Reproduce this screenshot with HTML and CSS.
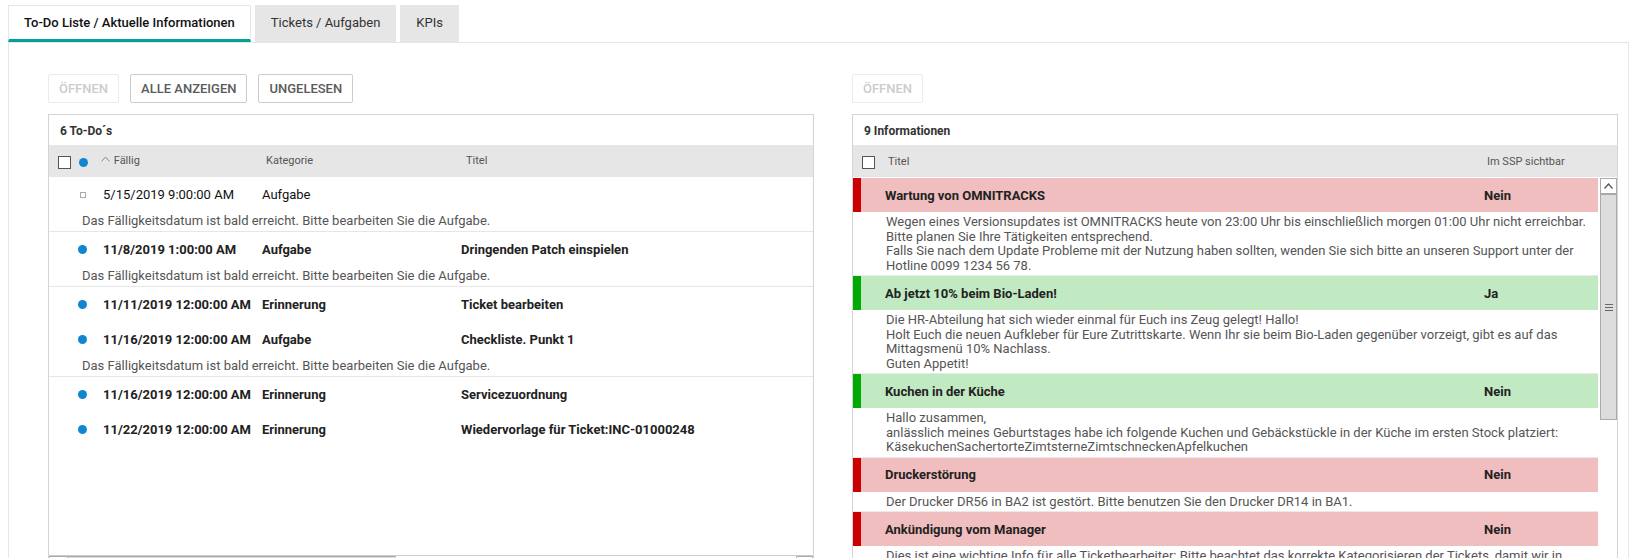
FILE: index.html
```html
<!DOCTYPE html>
<html lang="de">
<head>
    <meta charset="UTF-8">
    <title>To-Do Liste / Aktuelle Informationen</title>
    <link rel="stylesheet" href="styles.css">
</head>
<body>
    <div class="page">
        <div class="tabs">
            <div class="tab active">To-Do Liste / Aktuelle Informationen</div>
            <div class="tab">Tickets / Aufgaben</div>
            <div class="tab">KPIs</div>
        </div>

        <div class="content">
            <div class="columns">
                <!-- To-Do Liste -->
                <section class="col">
                    <div class="toolbar">
                        <button class="btn" disabled>Öffnen</button>
                        <button class="btn">Alle anzeigen</button>
                        <button class="btn">Ungelesen</button>
                    </div>
                    <div class="panel">
                        <div class="panel-title">6 To-Do´s</div>
                        <div class="todo-head">
                            <div class="head-check"><span class="checkbox"></span><span class="dot"></span></div>
                            <div class="sort">
                                <svg width="9" height="6" viewBox="0 0 9 6"><path d="M0.5 5.5 L4.5 1 L8.5 5.5" fill="none" stroke="#888" stroke-width="1"/></svg>
                                Fällig
                            </div>
                            <div>Kategorie</div>
                            <div>Titel</div>
                        </div>
                        <div class="todo-list">
                            <div class="todo-group">
                                <div class="todo-row read">
                                    <div class="mark"><span class="read-icon"></span></div>
                                    <div>5/15/2019 9:00:00 AM</div>
                                    <div>Aufgabe</div>
                                    <div></div>
                                </div>
                                <div class="todo-desc">Das Fälligkeitsdatum ist bald erreicht. Bitte bearbeiten Sie die Aufgabe.</div>
                            </div>
                            <div class="todo-group">
                                <div class="todo-row">
                                    <div class="mark"><span class="dot"></span></div>
                                    <div>11/8/2019 1:00:00 AM</div>
                                    <div>Aufgabe</div>
                                    <div>Dringenden Patch einspielen</div>
                                </div>
                                <div class="todo-desc">Das Fälligkeitsdatum ist bald erreicht. Bitte bearbeiten Sie die Aufgabe.</div>
                            </div>
                            <div class="todo-group">
                                <div class="todo-row">
                                    <div class="mark"><span class="dot"></span></div>
                                    <div>11/11/2019 12:00:00 AM</div>
                                    <div>Erinnerung</div>
                                    <div>Ticket bearbeiten</div>
                                </div>
                                <div class="todo-row">
                                    <div class="mark"><span class="dot"></span></div>
                                    <div>11/16/2019 12:00:00 AM</div>
                                    <div>Aufgabe</div>
                                    <div>Checkliste. Punkt 1</div>
                                </div>
                                <div class="todo-desc">Das Fälligkeitsdatum ist bald erreicht. Bitte bearbeiten Sie die Aufgabe.</div>
                            </div>
                            <div class="todo-group last">
                                <div class="todo-row">
                                    <div class="mark"><span class="dot"></span></div>
                                    <div>11/16/2019 12:00:00 AM</div>
                                    <div>Erinnerung</div>
                                    <div>Servicezuordnung</div>
                                </div>
                                <div class="todo-row">
                                    <div class="mark"><span class="dot"></span></div>
                                    <div>11/22/2019 12:00:00 AM</div>
                                    <div>Erinnerung</div>
                                    <div>Wiedervorlage für Ticket:INC-01000248</div>
                                </div>
                            </div>
                        </div>
                        <div class="hscroll">
                            <span class="hs-btn"></span>
                            <span class="hs-thumb"></span>
                            <span class="hs-track"></span>
                            <span class="hs-btn end"></span>
                        </div>
                    </div>
                </section>

                <!-- Informationen -->
                <section class="col">
                    <div class="toolbar">
                        <button class="btn" disabled>Öffnen</button>
                    </div>
                    <div class="panel">
                        <div class="panel-title">9 Informationen</div>
                        <div class="info-head">
                            <div><span class="checkbox"></span></div>
                            <div>Titel</div>
                            <div>Im SSP sichtbar</div>
                        </div>
                        <div class="info-body">
                            <div class="info-list">
                                <div class="info-row red">
                                    <div>Wartung von OMNITRACKS</div>
                                    <div>Nein</div>
                                </div>
                                <div class="info-desc">Wegen eines Versionsupdates ist OMNITRACKS heute von 23:00 Uhr bis einschließlich morgen 01:00 Uhr nicht erreichbar.<br>Bitte planen Sie Ihre Tätigkeiten entsprechend.<br>Falls Sie nach dem Update Probleme mit der Nutzung haben sollten, wenden Sie sich bitte an unseren Support unter der Hotline 0099 1234 56 78.</div>

                                <div class="info-row green">
                                    <div>Ab jetzt 10% beim Bio-Laden!</div>
                                    <div>Ja</div>
                                </div>
                                <div class="info-desc">Die HR-Abteilung hat sich wieder einmal für Euch ins Zeug gelegt! Hallo!<br>Holt Euch die neuen Aufkleber für Eure Zutrittskarte. Wenn Ihr sie beim Bio-Laden gegenüber vorzeigt, gibt es auf das Mittagsmenü 10% Nachlass.<br>Guten Appetit!</div>

                                <div class="info-row green">
                                    <div>Kuchen in der Küche</div>
                                    <div>Nein</div>
                                </div>
                                <div class="info-desc">Hallo zusammen,<br>anlässlich meines Geburtstages habe ich folgende Kuchen und Gebäckstückle in der Küche im ersten Stock platziert:<br>KäsekuchenSachertorteZimtsterneZimtschneckenApfelkuchen</div>

                                <div class="info-row red">
                                    <div>Druckerstörung</div>
                                    <div>Nein</div>
                                </div>
                                <div class="info-desc">Der Drucker DR56 in BA2 ist gestört. Bitte benutzen Sie den Drucker DR14 in BA1.</div>

                                <div class="info-row red">
                                    <div>Ankündigung vom Manager</div>
                                    <div>Nein</div>
                                </div>
                                <div class="info-desc">Dies ist eine wichtige Info für alle Ticketbearbeiter: Bitte beachtet das korrekte Kategorisieren der Tickets, damit wir in Zukunft bessere Auswertungen erstellen können.</div>
                            </div>
                            <div class="vscroll">
                                <span class="vs-btn">
                                    <svg width="9" height="6" viewBox="0 0 9 6"><path d="M0.5 5.5 L4.5 1 L8.5 5.5" fill="none" stroke="#555" stroke-width="1.2"/></svg>
                                </span>
                                <span class="vs-thumb">
                                    <svg width="8" height="7" viewBox="0 0 8 7"><path d="M0 0.5 H8 M0 3.5 H8 M0 6.5 H8" stroke="#666" stroke-width="1.2"/></svg>
                                </span>
                            </div>
                        </div>
                    </div>
                </section>
            </div>
        </div>
    </div>
</body>
</html>
```

FILE: styles.css
```css
html, body {
    margin: 0;
    padding: 0;
    overflow: hidden;
    background: #fff;
}
body {
    font-family: Roboto, "Liberation Sans", Arial, sans-serif;
    font-size: 13px;
    color: #222;
}
.page {
    padding: 5px 11px 0 8px;
}

/* Tabs */
.tabs {
    display: flex;
    gap: 4px;
    height: 37px;
}
.tab {
    padding: 0 16px;
    line-height: 36px;
    background: #e6e6e6;
    color: #333;
    font-size: 13px;
}
.tab.active {
    background: #fff;
    border: 1px solid #e6e6e6;
    border-bottom: 3px solid #00a19a;
    line-height: 33px;
    font-weight: 500;
    color: #111;
    padding: 0 15px;
}

/* Content */
.content {
    border: 1px solid #e6e6e6;
    padding: 31px 10px 0 39px;
    height: 600px;
}
.columns {
    display: grid;
    grid-template-columns: 1fr 1fr;
    gap: 38px;
}
.toolbar {
    display: flex;
    gap: 11px;
    height: 29px;
    margin-bottom: 11px;
}
.btn {
    font-family: inherit;
    font-size: 13px;
    font-weight: 500;
    text-transform: uppercase;
    color: #5a5a5a;
    background: #fff;
    border: 1px solid #ccc;
    border-radius: 2px;
    padding: 0 10px;
    height: 29px;
}
.btn:disabled {
    color: #ccc;
    border-color: #ebebeb;
}

/* Panels */
.panel {
    border: 1px solid #d4d4d4;
    background: #fff;
}
.panel-title {
    height: 30px;
    line-height: 32px;
    padding-left: 11px;
    font-size: 12px;
    font-weight: bold;
    color: #333;
}
.checkbox {
    display: inline-block;
    width: 11px;
    height: 11px;
    border: 1px solid #555;
    background: #fff;
}
.dot {
    display: inline-block;
    width: 9px;
    height: 9px;
    border-radius: 50%;
    background: #1186d0;
}

/* To-Do list */
.todo-head {
    display: grid;
    grid-template-columns: 52px 165px 200px 1fr;
    align-items: center;
    height: 32px;
    padding-bottom: 2px;
    box-sizing: border-box;
    background: #e6e6e6;
    font-size: 11px;
    color: #555;
}
.head-check {
    display: flex;
    align-items: center;
    gap: 8px;
    padding-left: 9px;
    padding-top: 4px;
}
.sort svg {
    margin-right: 1px;
    vertical-align: 2px;
}
.todo-list {
    height: 378px;
    overflow: hidden;
}
.todo-group {
    border-bottom: 1px solid #e6e6e6;
}
.todo-group.last {
    border-bottom: none;
}
.todo-row {
    display: grid;
    grid-template-columns: 54px 159px 199px 1fr;
    align-items: center;
    height: 35px;
    font-weight: bold;
    color: #222;
}
.todo-row.read {
    font-weight: normal;
    color: #111;
}
.mark {
    padding-left: 29px;
    display: flex;
    align-items: center;
}
.read-icon {
    display: inline-block;
    width: 4px;
    height: 4px;
    border: 1px solid #aaa;
    margin-left: 2px;
}
.todo-desc {
    height: 19px;
    line-height: 18px;
    padding-left: 33px;
    color: #555;
}
.hscroll {
    display: flex;
    height: 17px;
    border-top: 1px solid #ccc;
}
.hs-btn {
    width: 17px;
    border: 1px solid #bbb;
    border-top-color: #aaa;
}
.hs-btn.end {
    width: 15px;
}
.hs-thumb {
    width: 328px;
    background: #ddd;
    border-top: 1px solid #aaa;
}
.hs-track {
    flex: 1;
}

/* Informationen */
.info-head {
    display: grid;
    grid-template-columns: 26px 599px 1fr;
    align-items: center;
    height: 32px;
    padding-left: 9px;
    background: #e6e6e6;
    font-size: 11px;
    color: #555;
}
.info-head .checkbox {
    vertical-align: -6px;
}
.info-body {
    display: flex;
    height: 380px;
    padding-top: 1px;
    overflow: hidden;
}
.info-list {
    flex: 1;
}
.info-row {
    display: grid;
    grid-template-columns: 599px 1fr;
    align-items: center;
    height: 34px;
    box-sizing: border-box;
    padding-left: 24px;
    border-left: 8px solid;
    font-weight: bold;
    color: #222;
}
.info-row.red {
    background: #f0bebe;
    border-left-color: #cc0000;
}
.info-row.green {
    background: #c2eac2;
    border-left-color: #00aa00;
}
.info-desc {
    padding: 3px 4px 2px 33px;
    line-height: 14.5px;
    color: #555;
    border-bottom: 1px solid #eaeaea;
}
.vscroll {
    width: 17px;
    margin-left: 2px;
    display: flex;
    flex-direction: column;
}
.vs-btn {
    height: 16px;
    box-sizing: border-box;
    border: 1px solid #aaa;
    background: #fff;
    display: flex;
    align-items: center;
    justify-content: center;
}
.vs-thumb {
    height: 226px;
    box-sizing: border-box;
    border: 1px solid #aaa;
    background: #ddd;
    display: flex;
    align-items: center;
    justify-content: center;
}
```
